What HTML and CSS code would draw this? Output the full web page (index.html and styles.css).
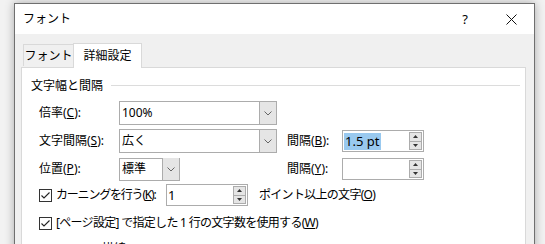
FILE: index.html
```html
<!DOCTYPE html>
<html lang="ja">
<head>
    <meta charset="UTF-8">
    <title>フォント</title>
    <link rel="stylesheet" href="styles.css">
</head>
<body>
<div class="dialog">
    <div class="titlebar">
        <span class="title">フォント</span>
        <span class="help">?</span>
        <span class="close">
            <svg width="11" height="11" viewBox="0 0 11 11"><path d="M0.5 0.5 L10.5 10.5 M10.5 0.5 L0.5 10.5" stroke="#111" stroke-width="1"/></svg>
        </span>
    </div>
    <div class="body">
        <div class="tabs">
            <div class="tab">フォント</div>
            <div class="tab active">詳細設定</div>
        </div>
        <div class="panel">
            <div class="group-head">
                <span>文字幅と間隔</span>
                <span class="rule"></span>
            </div>

            <div class="row r1">
                <span class="lbl">倍率(<u>C</u>):</span>
                <div class="combo">
                    <span class="val">100%</span>
                    <span class="drop"><svg width="8" height="5" viewBox="0 0 8 5"><path d="M0.5 0.5 L4 4 L7.5 0.5" fill="none" stroke="#666"/></svg></span>
                </div>
            </div>

            <div class="row r2">
                <span class="lbl">文字間隔(<u>S</u>):</span>
                <div class="combo">
                    <span class="val">広く</span>
                    <span class="drop"><svg width="8" height="5" viewBox="0 0 8 5"><path d="M0.5 0.5 L4 4 L7.5 0.5" fill="none" stroke="#666"/></svg></span>
                </div>
                <span></span>
                <span class="lbl">間隔(<u>B</u>):</span>
                <div class="spin">
                    <span class="val"><span class="sel">1.5 pt</span></span>
                    <span class="arrows">
                        <span class="up"><svg width="5" height="3" viewBox="0 0 5 3"><path d="M0 3 L2.5 0 L5 3 Z" fill="#333"/></svg></span>
                        <span class="down"><svg width="5" height="3" viewBox="0 0 5 3"><path d="M0 0 L2.5 3 L5 0 Z" fill="#333"/></svg></span>
                    </span>
                </div>
            </div>

            <div class="row r3">
                <span class="lbl">位置(<u>P</u>):</span>
                <div class="combo short">
                    <span class="val">標準</span>
                    <span class="drop"><svg width="8" height="5" viewBox="0 0 8 5"><path d="M0.5 0.5 L4 4 L7.5 0.5" fill="none" stroke="#666"/></svg></span>
                </div>
                <span></span>
                <span class="lbl">間隔(<u>Y</u>):</span>
                <div class="spin">
                    <span class="val"></span>
                    <span class="arrows">
                        <span class="up"><svg width="5" height="3" viewBox="0 0 5 3"><path d="M0 3 L2.5 0 L5 3 Z" fill="#333"/></svg></span>
                        <span class="down"><svg width="5" height="3" viewBox="0 0 5 3"><path d="M0 0 L2.5 3 L5 0 Z" fill="#333"/></svg></span>
                    </span>
                </div>
            </div>

            <div class="check-row r4">
                <div class="check-label">
                    <svg class="box" width="13" height="13" viewBox="0 0 13 13"><rect x="0.5" y="0.5" width="12" height="12" fill="#fff" stroke="#333"/><path d="M2.5 6.5 L5 9 L10.5 3.5" fill="none" stroke="#222" stroke-width="1.1"/></svg>
                    <span class="tighter">カーニングを行う(<u>K</u>):</span>
                </div>
                <div class="spin">
                    <span class="val">1</span>
                    <span class="arrows">
                        <span class="up"><svg width="5" height="3" viewBox="0 0 5 3"><path d="M0 3 L2.5 0 L5 3 Z" fill="#333"/></svg></span>
                        <span class="down"><svg width="5" height="3" viewBox="0 0 5 3"><path d="M0 0 L2.5 3 L5 0 Z" fill="#333"/></svg></span>
                    </span>
                </div>
                <span class="after tight">ポイント以上の文字(<u>O</u>)</span>
            </div>

            <div class="check-row r5">
                <svg class="box" width="13" height="13" viewBox="0 0 13 13"><rect x="0.5" y="0.5" width="12" height="12" fill="#fff" stroke="#333"/><path d="M2.5 6.5 L5 9 L10.5 3.5" fill="none" stroke="#222" stroke-width="1.1"/></svg>
                <span class="tight">[ページ設定] で指定した 1 行の文字数を使用する(<u>W</u>)</span>
            </div>

            <div class="row-cut">描線</div>
        </div>
    </div>
</div>
</body>
</html>
```

FILE: styles.css
```css
body{
    margin: 0;
    background-color: #f2f2f2;
    font-family: "Noto Sans", "Noto Sans CJK JP", sans-serif;
    font-size: 12px;
    line-height: 16px;
    color: #000;
    overflow: hidden;
    height: 244px;
}
.dialog{
    margin: 3px 0 0 14px;
    width: 521px;
    height: 320px;
    box-sizing: border-box;
    border: 1px solid #6f6f6f;
    background-color: #f0f0f0;
    box-shadow: 0 0 9px rgba(0, 0, 0, 0.3);
}
.titlebar{
    height: 30px;
    background-color: #fff;
    display: flex;
    align-items: center;
    padding-left: 8px;
}
.title{
    flex: 1;
}
.help{
    width: 12px;
    text-align: center;
    margin-right: 35px;
    font-size: 13px;
}
.close{
    display: flex;
    width: 11px;
    margin-right: 17px;
}
.body{
    padding: 8px 8px 0 6px;
}
.tabs{
    display: flex;
    align-items: flex-end;
    height: 25px;
    padding-left: 2px;
}
.tab{
    box-sizing: border-box;
    height: 22px;
    width: 50px;
    border: 1px solid #d9d9d9;
    border-right: none;
    border-bottom: none;
    display: flex;
    align-items: center;
    justify-content: center;
    margin-bottom: 1px;
}
.tab.active{
    width: 69px;
    height: 25px;
    margin-bottom: -1px;
    background-color: #fff;
    border-right: 1px solid #d9d9d9;
    position: relative;
    z-index: 1;
    padding-bottom: 1px;
}
.panel{
    box-sizing: border-box;
    width: 505px;
    height: 300px;
    background-color: #fff;
    border: 1px solid #d9d9d9;
    padding-top: 9px;
}
.group-head{
    height: 18px;
    display: flex;
    align-items: center;
    margin-left: 9px;
    margin-right: 5px;
}
.rule{
    flex: 1;
    height: 1px;
    background-color: #dcdcdc;
    margin-left: 8px;
    margin-top: -1px;
}
.row{
    display: grid;
    grid-template-columns: 80px 158px 10px 55px 82px;
    align-items: center;
    height: 24px;
    margin-left: 17px;
    margin-top: 4px;
}
.r1{
    margin-top: 6px;
}
.combo{
    box-sizing: border-box;
    height: 24px;
    border: 1px solid #acacac;
    display: flex;
    align-items: center;
    background-color: #fff;
}
.combo.short{
    width: 61px;
    height: 23px;
}
.combo .val{
    flex: 1;
    padding-left: 2px;
}
.drop{
    box-sizing: border-box;
    width: 17px;
    height: 22px;
    background-color: #e5e5e5;
    border-left: 1px solid #acacac;
    display: flex;
    align-items: center;
    justify-content: center;
}
.spin{
    box-sizing: border-box;
    width: 82px;
    height: 22px;
    border: 1px solid #acacac;
    display: flex;
    align-items: center;
    background-color: #fff;
}
.spin .val{
    flex: 1;
    padding-left: 1px;
    font-size: 13px;
}
.sel{
    background-color: #99c9ef;
    display: inline-block;
    height: 17px;
    line-height: 17px;
    padding: 0 2px 0 1px;
}
.arrows{
    box-sizing: border-box;
    width: 13px;
    height: 18px;
    margin-right: 1px;
    display: flex;
    flex-direction: column;
    border: 1px solid #acacac;
    background-color: #e5e5e5;
}
.arrows span{
    flex: 1;
    display: flex;
    align-items: center;
    justify-content: center;
}
.arrows .up{
    border-bottom: 1px solid #acacac;
}
.check-row{
    display: flex;
    align-items: center;
    height: 24px;
    margin-left: 17px;
    margin-top: 2px;
    white-space: nowrap;
}
.check-label{
    display: flex;
    align-items: center;
    width: 127px;
    flex-shrink: 0;
}
.tight{
    letter-spacing: -0.7px;
}
.tighter{
    letter-spacing: -1.2px;
}
.box{
    margin-right: 4px;
    flex-shrink: 0;
}
.after{
    margin-left: 11px;
}
.r5{
    margin-top: 4px;
}
.row-cut{
    margin: 6px 0 0 80px;
}
```
